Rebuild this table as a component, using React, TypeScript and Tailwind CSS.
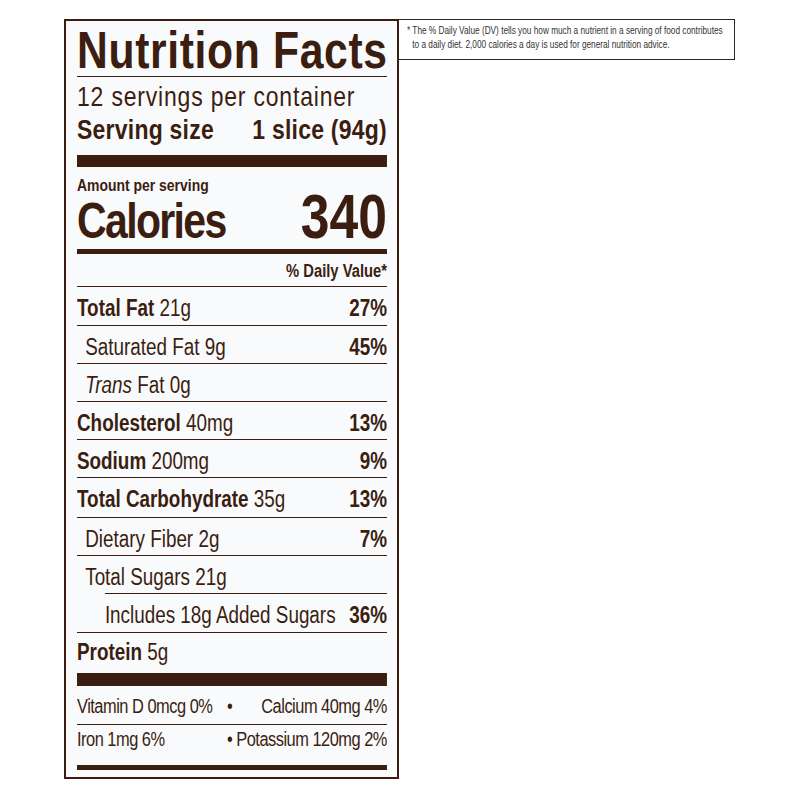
import clsx from 'clsx'

type Nutrient = {
  bold?: string
  italic?: string
  rest: string
  pct?: string
  h: string
  indent?: 'sub' | 'deep'
}

const nutrients: Nutrient[] = [
  { bold: 'Total Fat', rest: ' 21g', pct: '27%', h: 'h-[39px]' },
  { rest: 'Saturated Fat 9g', pct: '45%', h: 'h-[38px]', indent: 'sub' },
  { italic: 'Trans', rest: ' Fat 0g', h: 'h-[38px]', indent: 'sub' },
  { bold: 'Cholesterol', rest: ' 40mg', pct: '13%', h: 'h-[38px]' },
  { bold: 'Sodium', rest: ' 200mg', pct: '9%', h: 'h-[38px]' },
  { bold: 'Total Carbohydrate', rest: ' 35g', pct: '13%', h: 'h-[40px]' },
  { rest: 'Dietary Fiber 2g', pct: '7%', h: 'h-[38px]', indent: 'sub' },
  { rest: 'Total Sugars 21g', h: 'h-[38px]', indent: 'sub' },
  { rest: 'Includes 18g Added Sugars', pct: '36%', h: 'h-[39px]', indent: 'deep' }
]

// label type is condensed: the column is laid out at 378px and squeezed to 310px
const NutrientRow = ({ n }: { n: Nutrient }) => (
  <div
    className={clsx(
      'flex justify-between whitespace-nowrap border-t border-[#3b1e10] pt-[9px] text-[23px] leading-[24px]',
      n.h,
      n.indent === 'sub' && 'pl-[10px]',
      n.indent === 'deep' && 'ml-[34px]'
    )}
  >
    <span>
      {n.bold && <span className="font-bold">{n.bold}</span>}
      {n.italic && <span className="italic">{n.italic}</span>}
      {n.rest}
    </span>
    {n.pct && <span className="font-bold">{n.pct}</span>}
  </div>
)

export default function App() {
  return (
    <div className="flex min-h-[800px] items-start bg-white pl-[64px] pt-[19px] font-['Liberation_Sans',Arial,sans-serif] text-[#3b1e10]">
      <div className="w-[335px] shrink-0 border-2 border-[#3b1e10] bg-[#f9fafc] pl-[11px] pr-[10px] pb-[7px]">
        <div className="w-[378px] origin-left scale-x-[0.82] whitespace-nowrap">
          <h1 className="mt-[4px] border-b border-[#3b1e10] text-[52px] font-bold leading-[51px] tracking-[0.8px]">
            Nutrition Facts
          </h1>
          <div className="mt-[5px] text-[28px] leading-[30px] tracking-[1px]">12 servings per container</div>
          <div className="mt-[3px] flex justify-between text-[28px] font-bold leading-[30px] tracking-[0.3px]">
            <span>Serving size</span>
            <span>1 slice (94g)</span>
          </div>
          <div className="mt-[10px] h-[12px] bg-[#3b1e10]" />

          <div className="mt-[9px] text-[17px] font-bold leading-[20px]">Amount per serving</div>
          <div className="flex h-[43px] items-baseline justify-between font-bold">
            <span className="text-[50px] leading-[40px] tracking-[-2px]">Calories</span>
            <span className="text-[63px] leading-[40px]">340</span>
          </div>
          <div className="mt-[10px] h-[5px] bg-[#3b1e10]" />
          <div className="pt-[2px] text-right text-[18px] font-bold leading-[30px]">% Daily Value*</div>

          {nutrients.map(n => (
            <NutrientRow key={n.rest} n={n} />
          ))}

          <div className="h-[41px] border-t border-[#3b1e10] pt-[7px] text-[23px] leading-[24px]">
            <span className="font-bold">Protein</span> 5g
          </div>
          <div className="h-[13px] bg-[#3b1e10]" />

          <div className="flex h-[39px] border-b border-[#3b1e10] pt-[9px] text-[20px] leading-[22px] tracking-[-0.6px]">
            <span>Vitamin D 0mcg 0%</span>
            <span className="ml-[18px]">•</span>
            <span className="flex-1" />
            <span>Calcium 40mg 4%</span>
          </div>
          <div className="flex h-[40px] pt-[3px] text-[20px] leading-[22px] tracking-[-0.6px]">
            <span>Iron 1mg 6%</span>
            <span className="flex-1" />
            <span>• Potassium 120mg 2%</span>
          </div>
          <div className="h-[5px] bg-[#3b1e10]" />
        </div>
      </div>

      <div className="h-[41px] w-[336px] shrink-0 border border-l-0 border-[#2e2420] bg-white pl-[8px] pt-[3px] text-[11px] leading-[14px] text-[#333333]">
        <div className="w-[432px] origin-left scale-x-[0.75] pl-[7px] -indent-[7px]">
          * The % Daily Value (DV) tells you how much a nutrient in a serving of food contributes to a daily diet. 2,000 calories a day is used for general nutrition advice.
        </div>
      </div>
    </div>
  )
}
